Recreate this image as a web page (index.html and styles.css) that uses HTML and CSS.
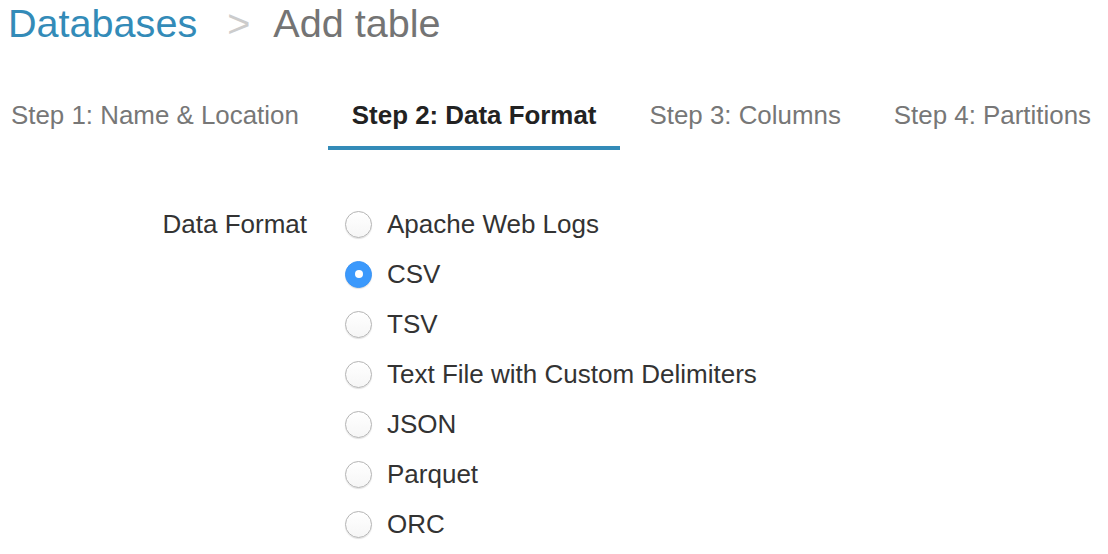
FILE: index.html
```html
<!DOCTYPE html>
<html>
<head>
<meta charset="utf-8">
<link rel="stylesheet" href="styles.css">
</head>
<body>
<h1 class="crumbs"><span class="crumb-link">Databases</span><span class="crumb-sep">&gt;</span><span class="crumb-current">Add table</span></h1>
<ul class="steps">
  <li class="step step-first">Step 1: Name &amp; Location</li>
  <li class="step step-active">Step 2: Data Format</li>
  <li class="step">Step 3: Columns</li>
  <li class="step">Step 4: Partitions</li>
</ul>
<form class="form">
  <div class="field">
    <div class="field-label">Data Format</div>
    <div class="options">
      <label class="option"><input class="radio" type="radio" name="fmt"><span>Apache Web Logs</span></label>
      <label class="option"><input class="radio" type="radio" name="fmt" checked><span>CSV</span></label>
      <label class="option"><input class="radio" type="radio" name="fmt"><span>TSV</span></label>
      <label class="option"><input class="radio" type="radio" name="fmt"><span>Text File with Custom Delimiters</span></label>
      <label class="option"><input class="radio" type="radio" name="fmt"><span>JSON</span></label>
      <label class="option"><input class="radio" type="radio" name="fmt"><span>Parquet</span></label>
      <label class="option"><input class="radio" type="radio" name="fmt"><span>ORC</span></label>
    </div>
  </div>
</form>
</body>
</html>
```
FILE: styles.css
```css
html, body {
  margin: 0;
  padding: 0;
  background: #fff;
}
body {
  font-family: "Liberation Sans", Arial, Helvetica, sans-serif;
  color: #333;
  overflow: hidden;
}
.crumbs {
  margin: 0;
  padding-left: 8px;
  font-size: 39.6px;
  font-weight: normal;
  line-height: 46px;
  white-space: nowrap;
}
.crumb-link {
  color: #338bb8;
}
.crumb-sep {
  color: #ccc;
  margin: 0 23px 0 30px;
}
.crumb-current {
  color: #747474;
}
.steps {
  list-style: none;
  margin: 44px 0 0 0;
  padding: 0;
  display: flex;
  gap: 5px;
  font-size: 25.9px;
  white-space: nowrap;
}
.step {
  padding: 10px 24px 16px;
  line-height: 30px;
  color: #777;
  border-bottom: 4px solid transparent;
}
.step-first {
  padding-left: 11px;
}
.step-active {
  color: #222;
  font-weight: bold;
  border-bottom-color: #338bb8;
}
.form {
  margin-top: 49px;
}
.field {
  display: flex;
  font-size: 26px;
}
.field-label {
  width: 307px;
  text-align: right;
  line-height: 50px;
  color: #333;
  padding-right: 38px;
}
.options {
  display: flex;
  flex-direction: column;
}
.option {
  display: flex;
  align-items: center;
  gap: 15px;
  height: 50px;
  color: #333;
}
.radio {
  -webkit-appearance: none;
  appearance: none;
  margin: 0;
  width: 27px;
  height: 27px;
  border-radius: 50%;
  border: 1px solid #b4b4b4;
  background: linear-gradient(#ffffff, #f6f6f6);
  box-shadow: 0 1px 1px rgba(0,0,0,0.12);
  box-sizing: border-box;
  display: grid;
  place-items: center;
  flex: none;
}
.radio:checked {
  border-color: #3a95f7;
  background: #3b99fc;
}
.radio:checked::after {
  content: "";
  width: 8px;
  height: 8px;
  border-radius: 50%;
  background: #fff;
}
```
